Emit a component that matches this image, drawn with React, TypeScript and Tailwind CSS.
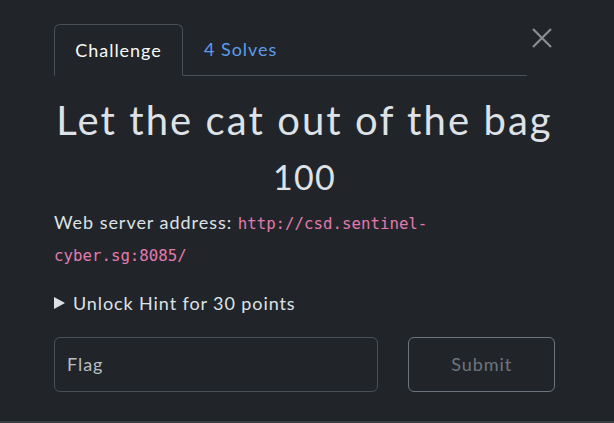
import React from 'react';

export default function App() {
  return (
    <div
      className="w-[614px] h-[423px] bg-[#212529] flex flex-col overflow-hidden tracking-[0.06em]"
      style={{ fontFamily: 'Lato, "Noto Sans", sans-serif' }}
    >
      <div className="flex-1 pl-[54px] pr-[59px] pt-[24px]">
        {/* tabs + close */}
        <div className="flex items-end">
          <div className="flex-1 flex items-end border-b border-[#495057]">
            <div className="h-[52px] w-[129px] -mb-px border border-[#495057] border-b-[#212529] rounded-t-[6px] flex items-center justify-center text-[18px] text-[#f8f9fa]">
              Challenge
            </div>
            <div className="h-[51px] pl-[21px] flex items-center text-[18px] text-[#5d9cec]">
              4 Solves
            </div>
          </div>
          <div className="w-[28px] self-start flex justify-end pt-[3px] pr-[2px]">
            <svg width="22" height="22" viewBox="0 0 22 22">
              <path d="M2 2 L20 20 M20 2 L2 20" stroke="#8b8e91" strokeWidth="2.2" />
            </svg>
          </div>
        </div>

        <h1 className="mt-[20px] text-center text-[40px] leading-[48px] tracking-[0.052em] text-[#dee2e6]">
          Let the cat out of the bag
        </h1>
        <div className="mt-[12px] text-center text-[34px] leading-[41px] tracking-[0.04em] text-[#dee2e6]">100</div>

        <p className="mt-[10px] text-[18px] leading-[30px] text-[#dee2e6]">
          Web server address:{' '}
          <code
            className="text-[15.75px] leading-[30px] tracking-normal text-[#e27aae] break-words"
            style={{ fontFamily: '"DejaVu Sans Mono", monospace' }}
          >
            http://csd.sentinel-cyber.sg:8085/
          </code>
        </p>

        <div className="mt-[17px] flex items-center gap-[8px] text-[18px] leading-[30px] tracking-[0.05em] text-[#dee2e6]">
          <svg width="11" height="12" viewBox="0 0 11 12">
            <path d="M0 0 L11 6 L0 12 Z" fill="#dee2e6" />
          </svg>
          <span>Unlock Hint for 30 points</span>
        </div>

        <div className="mt-[19px] flex gap-[30px]">
          <div className="w-[325px] h-[55px] border border-[#495057] rounded-[6px] flex items-center px-[12px] text-[18px] text-[#b9bdc1]">
            Flag
          </div>
          <div className="w-[147px] h-[55px] border border-[#6c757d] rounded-[6px] flex items-center justify-center text-[18px] text-[#6c757d]">
            Submit
          </div>
        </div>
      </div>
      <div className="h-[2px] bg-[#3a3f44]" />
    </div>
  );
}
